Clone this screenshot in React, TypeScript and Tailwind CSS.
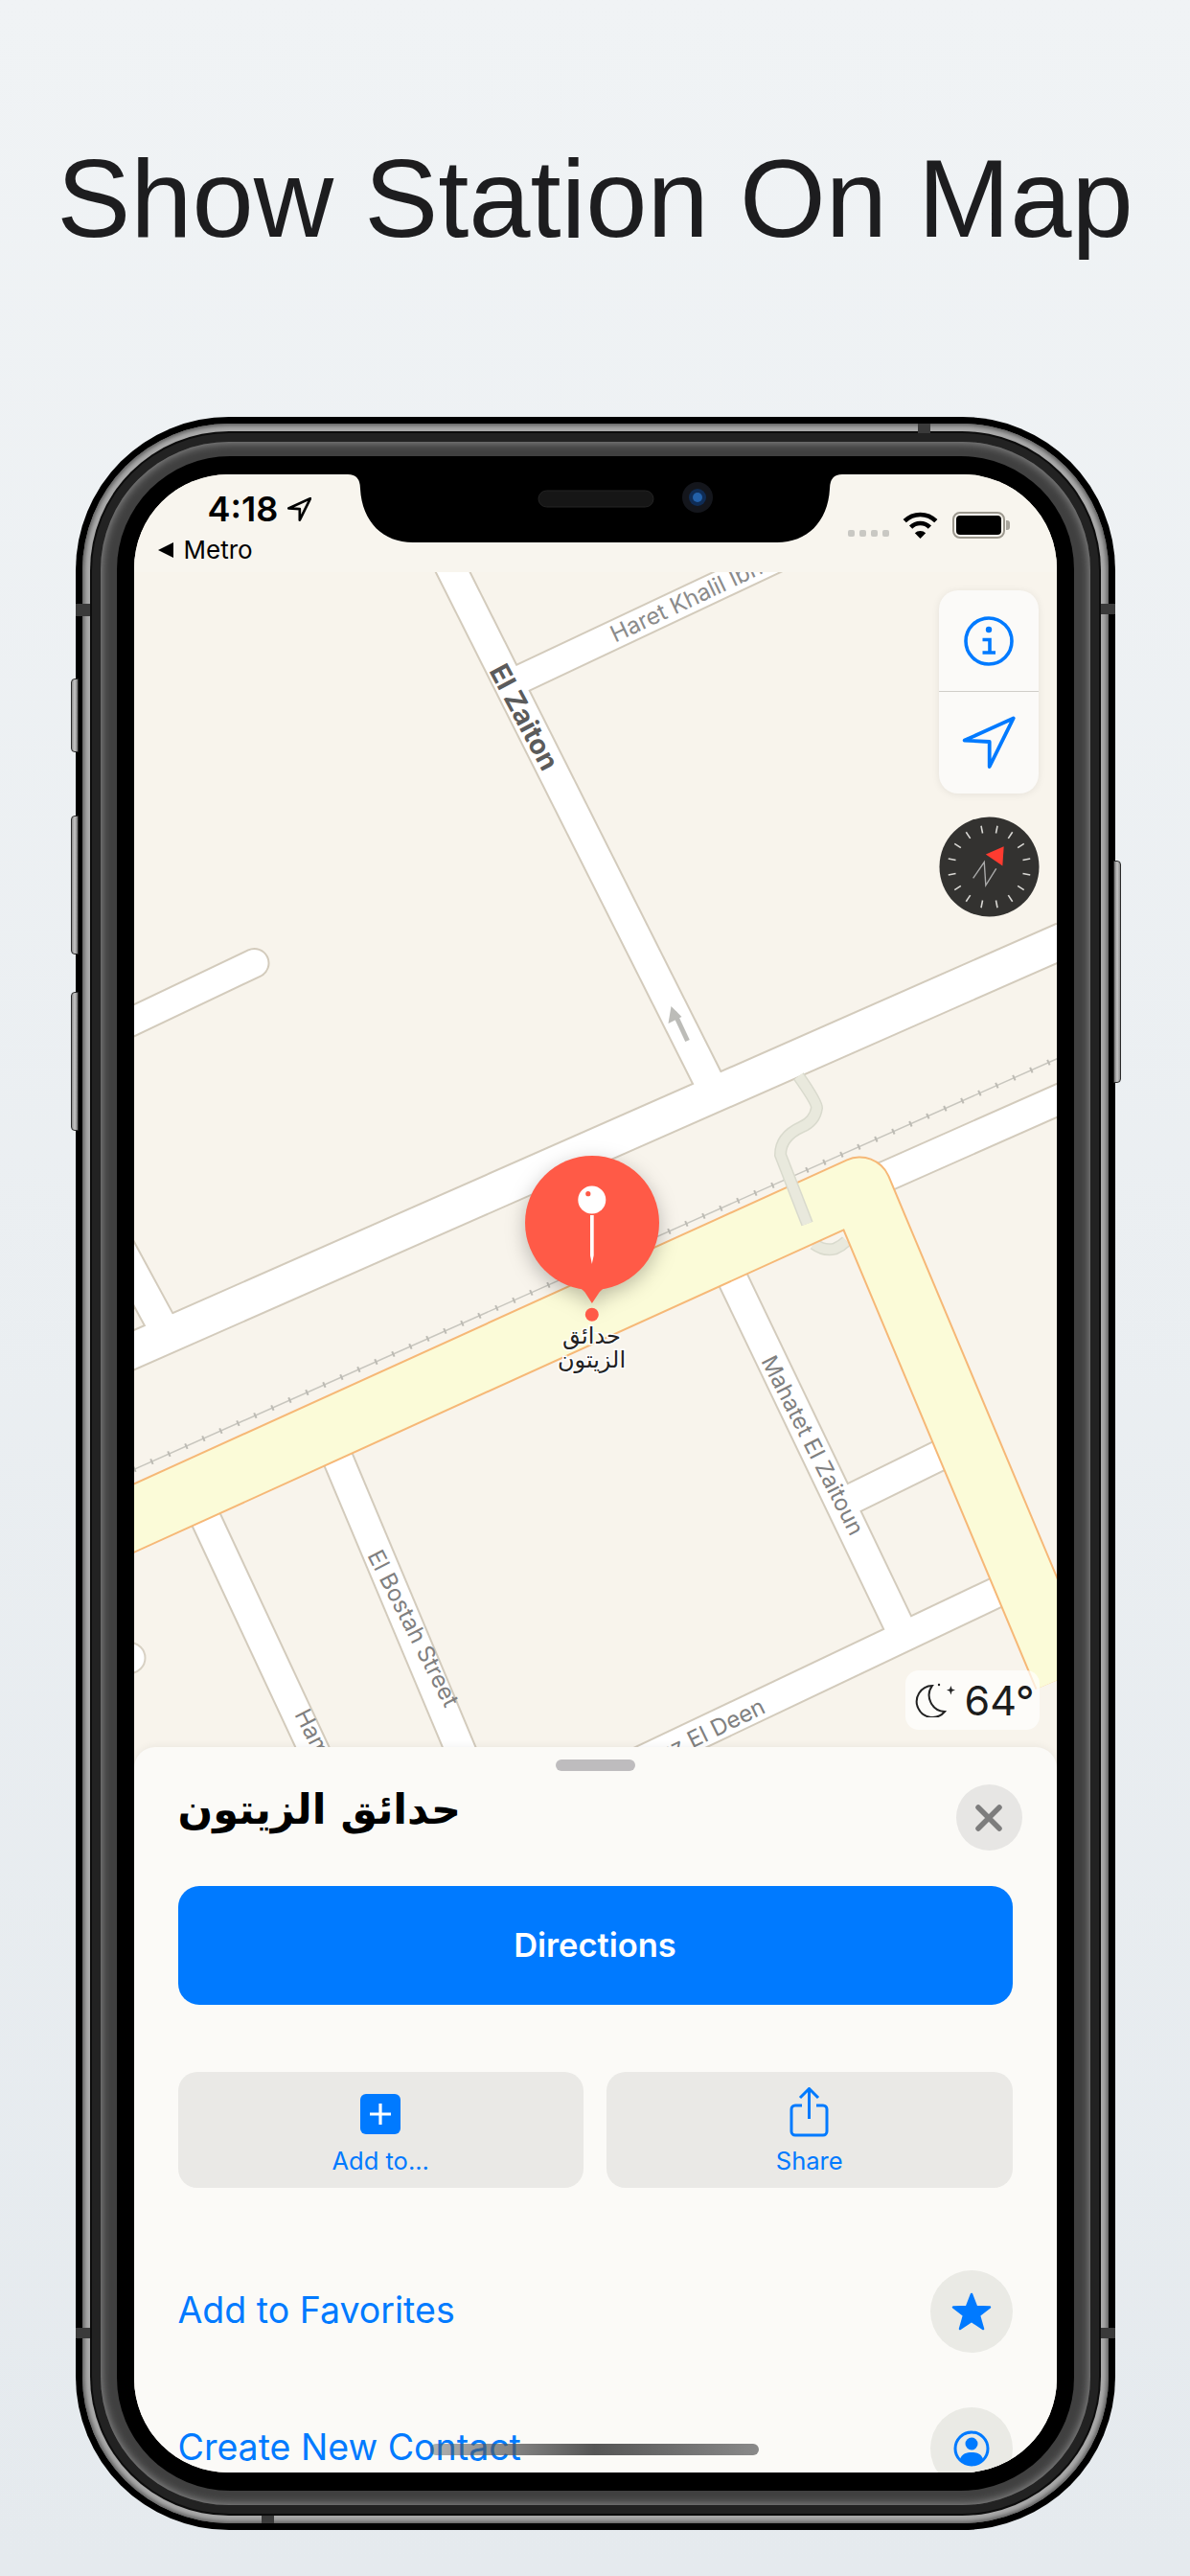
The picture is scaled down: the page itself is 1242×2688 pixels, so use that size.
const ui = "font-['Inter','Liberation_Sans',sans-serif]";
const arabic = "font-['DejaVu_Sans',sans-serif]";

type Road = { d: string; w: number; cap?: "round" | "butt" };

// page coordinates, the map svg viewBox starts at the screen corner
const roads: Road[] = [
  { d: "M100 1426 L1110 981", w: 36 },
  { d: "M441 535 L747 1144", w: 30 },
  { d: "M531 714 L900 540", w: 28 },
  { d: "M120 1074 L265 1005", w: 28, cap: "round" },
  { d: "M110 1275 L175 1395", w: 30 },
  { d: "M880 1247 L1110 1145", w: 30 },
  { d: "M345 1505 L490 1850", w: 30 },
  { d: "M205 1565 L338 1850", w: 30 },
  { d: "M750 1305 L949 1720", w: 30 },
  { d: "M620 1861 L1060 1652", w: 30 },
  { d: "M880 1568 L1000 1509", w: 30 },
];

const yellow = "M100 1602 L897 1240 L1111 1750";
const labelClass = "font-['Inter','Liberation_Sans',sans-serif]";

function MapLayer() {
  return (
    <svg viewBox="140 597 962 1248" className="block h-full w-full">
      <rect x="140" y="597" width="962" height="1248" fill="#f8f4ec" />
      <circle cx="135" cy="1730" r="16" fill="#fff" stroke="#d8d1c4" strokeWidth="2" />
      <path d="M849 1298 Q860 1306 871 1303 Q878 1300 883 1295" fill="none" stroke="#d9dacd" strokeWidth="13" />
      <path d="M849 1298 Q860 1306 871 1303 Q878 1300 883 1295" fill="none" stroke="#e9e9dd" strokeWidth="10" />
      {roads.map((r) => (
        <path key={r.d + "c"} d={r.d} fill="none" stroke="#d3cbbc" strokeWidth={r.w + 4} strokeLinecap={r.cap ?? "butt"} />
      ))}
      {roads.map((r) => (
        <path key={r.d} d={r.d} fill="none" stroke="#ffffff" strokeWidth={r.w} strokeLinecap={r.cap ?? "butt"} />
      ))}
      <path d="M139 1533.5 L1103 1104.6" stroke="#c8c6be" strokeWidth="1.5" />
      <path d="M139 1533.5 L1103 1104.6" stroke="#bdbbb4" strokeWidth="6" strokeDasharray="2 17.7" />
      <path d={yellow} fill="none" stroke="#f6b877" strokeWidth="67" strokeLinejoin="round" />
      <path d={yellow} fill="none" stroke="#fbfbd8" strokeWidth="63" strokeLinejoin="round" />
      <path d="M833 1123 Q852 1150 852 1156 Q850 1170 836 1176 Q814 1186 814 1205 L842 1277" fill="none" stroke="#d9dacd" strokeWidth="13" />
      <path d="M833 1123 Q852 1150 852 1156 Q850 1170 836 1176 Q814 1186 814 1205 L842 1277" fill="none" stroke="#e9e9dd" strokeWidth="10" />
      <path d="M717 1086 L703 1056" stroke="#bcbcb8" strokeWidth="5" fill="none" />
      <path d="M700 1050 L697 1068 L711 1061 Z" fill="#bcbcb8" />

      <text x="547" y="748" textAnchor="middle" dominantBaseline="central" transform="rotate(62 547 748)" fontSize="28.5" fontWeight="700" fill="#5b5b5b" className={labelClass}>El Zaiton</text>
      <text x="638" y="663" dominantBaseline="central" transform="rotate(-25.2 638 663)" fontSize="24" fill="#8b8b8b" className={labelClass}>Haret Khalil Ibn</text>
      <text x="848" y="1508" textAnchor="middle" dominantBaseline="central" transform="rotate(63 848 1508)" fontSize="23.5" fill="#808080" className={labelClass}>Mahatet El Zaitoun</text>
      <text x="431" y="1699" textAnchor="middle" dominantBaseline="central" transform="rotate(63 431 1699)" fontSize="24" fill="#808080" className={labelClass}>El Bostah Street</text>
      <text x="314" y="1785" dominantBaseline="central" transform="rotate(63 314 1785)" fontSize="24" fill="#808080" className={labelClass}>Hamdy</text>
      <text x="796" y="1779" textAnchor="end" dominantBaseline="central" transform="rotate(-26 796 1779)" fontSize="24" fill="#808080" className={labelClass}>Ezz El Deen</text>

      <g className="drop-shadow-[0_6px_10px_rgba(0,0,0,0.25)]">
        <circle cx="617.5" cy="1276" r="70" fill="#ff5a47" />
        <path d="M590 1336 Q608 1344 611 1350 L617.4 1360 L624 1350 Q627 1344 645 1336 Z" fill="#ff5a47" />
      </g>
      <circle cx="617.3" cy="1252" r="14.5" fill="#fff" />
      <circle cx="613.3" cy="1245.7" r="2.6" fill="#ff5a47" />
      <path d="M615.5 1268 H619.2 V1310 L617.3 1319 L615.5 1310 Z" fill="#fff" />
      <circle cx="617.3" cy="1371.7" r="7" fill="#ff5a47" />
      <g className={arabic} fontSize="24" textAnchor="middle" fill="#222" stroke="#fff" strokeWidth="3" paintOrder="stroke" direction="rtl">
        <text x="617" y="1402">حدائق</text>
        <text x="617" y="1427">الزيتون</text>
      </g>
    </svg>
  );
}

function Compass() {
  const ticks = Array.from({ length: 16 }, (_, i) => ((i * 22.5 + 11.25) * Math.PI) / 180);
  return (
    <svg viewBox="-53 -53 106 106" className="h-[105px] w-[105px]">
      <circle r="52.5" fill="#333230" />
      {ticks.map((a) => (
        <line key={a} x1={Math.sin(a) * 36} y1={-Math.cos(a) * 36} x2={Math.sin(a) * 44} y2={-Math.cos(a) * 44} stroke="#d9d8d4" strokeWidth="1.6" />
      ))}
      <path d="M-3.7 -13 L15.3 -21.5 L14 -1 Z" fill="#ff3b30" />
      <path d="M-17 12 L-5.3 -5 L-3.7 19.5 L7.3 2" fill="none" stroke="#aaa" strokeWidth="1.4" />
    </svg>
  );
}

function MapControls() {
  return (
    <div className="absolute right-[18px] top-[19px] flex flex-col items-center gap-[24px]">
      <div className="w-[104px] overflow-hidden rounded-[20px] bg-[#fbfaf8] shadow-[0_1px_8px_rgba(0,0,0,0.08)]">
        <div className="flex h-[106px] items-center justify-center border-b border-[#d0cec9]">
          <svg viewBox="0 0 54 54" className="h-[54px] w-[54px]" fill="none" stroke="#007aff">
            <circle cx="27" cy="27" r="24" strokeWidth="3.6" />
            <circle cx="27" cy="15" r="3.2" fill="#007aff" stroke="none" />
            <path d="M20.5 25.5 H28 V39 M20.5 39 H34" strokeWidth="3.6" />
          </svg>
        </div>
        <div className="flex h-[106px] items-center justify-center">
          <svg viewBox="0 0 56 56" className="h-[56px] w-[56px]" fill="none" stroke="#007aff" strokeWidth="3.8" strokeLinejoin="round">
            <path d="M53.7 2.5 L2.7 25.6 L28.7 27 L28.7 53 Z" />
          </svg>
        </div>
      </div>
      <Compass />
    </div>
  );
}

function Weather() {
  return (
    <div className="absolute left-[805px] top-[1146px] flex h-[62px] w-[140px] items-center gap-[8px] rounded-[14px] bg-white/70 pl-[8px]">
      <svg viewBox="0 0 46 36" className="h-[36px] w-[46px]" fill="none" stroke="#222" strokeWidth="2">
        <path d="M20 3 A16.5 16.5 0 1 0 33 30 A17 17 0 0 1 20 3 Z" />
        <path d="M39.4 3 L40.6 6.5 L44 7.6 L40.6 8.8 L39.4 12.5 L38.2 8.8 L35 7.6 L38.2 6.5 Z" fill="#222" stroke="none" />
        <circle cx="27" cy="2" r="1.2" fill="#222" stroke="none" />
      </svg>
      <span className={`${ui} text-[43px] leading-none text-[#1c1c1c]`}>64°</span>
    </div>
  );
}

function StatusBar() {
  return (
    <div className="relative flex h-[102px] shrink-0 justify-between bg-[#f8f5ee]">
      <div className={`${ui} pl-[25px] pt-[18px] text-black`}>
        <div className="flex items-center gap-[10px] pl-[52px]">
          <span className="text-[36px] font-semibold leading-[36px]">4:18</span>
          <svg viewBox="0 0 56 56" className="h-[25px] w-[25px]" fill="none" stroke="#000" strokeWidth="6" strokeLinejoin="round">
            <path d="M53.7 2.5 L2.7 25.6 L28.7 27 L28.7 53 Z" />
          </svg>
        </div>
        <div className="mt-[13px] flex items-center gap-[11px]">
          <div className="h-0 w-0 border-y-[8px] border-r-[16px] border-y-transparent border-r-black" />
          <span className="text-[26px] font-normal leading-[24px]">Metro</span>
        </div>
      </div>
      <div className="flex items-start pr-[49px] pt-[39px]">
        <div className="mt-[19px] flex gap-[5px]">
          <div className="h-[7px] w-[7px] rounded-[2px] bg-[#c9c8c3]" />
          <div className="h-[7px] w-[7px] rounded-[2px] bg-[#c9c8c3]" />
          <div className="h-[7px] w-[7px] rounded-[2px] bg-[#c9c8c3]" />
          <div className="h-[7px] w-[7px] rounded-[2px] bg-[#c9c8c3]" />
        </div>
        <svg viewBox="0 0 37 28" className="ml-[14px] h-[28px] w-[37px]" fill="none" stroke="#000" strokeWidth="4.6">
          <path d="M2.2 9.7 A23 23 0 0 1 34.8 9.7" />
          <path d="M8.6 16.1 A14 14 0 0 1 28.4 16.1" />
          <path d="M18.5 28 L12.8 22.3 A8 8 0 0 1 24.2 22.3 Z" fill="#000" stroke="none" />
        </svg>
        <div className="ml-[15px] flex items-center">
          <div className="h-[28px] w-[55px] rounded-[8px] border-2 border-[#9c988e] p-[2px]">
            <div className="h-full w-full rounded-[4px] bg-black" />
          </div>
          <div className="ml-[1px] h-[10px] w-[4px] rounded-r-[3px] bg-[#a8a59c]" />
        </div>
      </div>
    </div>
  );
}

function Notch() {
  return (
    <svg viewBox="360 495 522 71" className="absolute left-[220px] top-0 h-[71px] w-[522px]">
      <path d="M360 495 L363 495 Q376 495 376 510 C378 545 400 566 431 566 L811 566 C842 566 864 545 866 510 Q866 495 879 495 L882 495 Z" fill="#000" />
      <rect x="562" y="512" width="120" height="17" rx="8.5" fill="#161616" stroke="#242424" />
      <circle cx="728" cy="519" r="16" fill="#14161c" />
      <circle cx="728" cy="519" r="9" fill="#0f2c55" />
      <circle cx="728" cy="519" r="5" fill="#2360a8" />
    </svg>
  );
}

function Sheet() {
  return (
    <div className="relative -mt-[22px] flex-1 rounded-t-[22px] bg-[#fbfaf7] pt-[13px] shadow-[0_-1px_8px_rgba(0,0,0,0.06)]">
      <div className="mx-auto h-[12px] w-[83px] rounded-full bg-[#bebcbe]" />
      <div className="flex items-center justify-between pl-[46px] pr-[36px] pt-[14px]">
        <h2 dir="rtl" className={`${arabic} -translate-y-[9px] text-[43px] font-bold leading-[50px] text-black`}>حدائق الزيتون</h2>
        <button className="flex h-[69px] w-[69px] items-center justify-center rounded-full bg-[#e7e6e4]">
          <svg viewBox="0 0 28 28" className="h-[28px] w-[28px]" stroke="#7d7d7d" strokeWidth="5.5" strokeLinecap="round">
            <path d="M3 3 L25 25 M25 3 L3 25" />
          </svg>
        </button>
      </div>
      <div className="px-[46px]">
        <button className={`${ui} mt-[37px] h-[124px] w-full rounded-[22px] bg-[#007aff] text-[34.5px] font-semibold text-white`}>Directions</button>
        <div className={`${ui} mt-[70px] grid grid-cols-2 gap-[24px] text-[25.5px] text-[#007aff]`}>
          <button className="flex h-[121px] flex-col items-center rounded-[20px] bg-[#eae9e6] pt-[23px]">
            <span className="flex h-[42px] w-[42px] items-center justify-center rounded-[6px] bg-[#007aff]">
              <svg viewBox="0 0 24 24" className="h-[24px] w-[24px]" stroke="#fff" strokeWidth="3.2"><path d="M12 1 V23 M1 12 H23" /></svg>
            </span>
            <span className="mt-[12px] leading-[32px]">Add to...</span>
          </button>
          <button className="flex h-[121px] flex-col items-center rounded-[20px] bg-[#eae9e6] pt-[16px]">
            <svg viewBox="0 0 41 52" className="h-[52px] w-[41px]" fill="none" stroke="#007aff" strokeWidth="3">
              <path d="M13 19 H6 a4 4 0 0 0 -4 4 v23 a4 4 0 0 0 4 4 h29 a4 4 0 0 0 4 -4 V23 a4 4 0 0 0 -4 -4 h-7" />
              <path d="M20.5 33 V2 M11 11 L20.5 1.5 L30 11" />
            </svg>
            <span className="mt-[9px] leading-[32px]">Share</span>
          </button>
        </div>
        <div className={`${ui} mt-[85px] flex h-[87px] items-center justify-between text-[37.5px] text-[#007aff]`}>
          <span>Add to Favorites</span>
          <span className="flex h-[86px] w-[86px] items-center justify-center rounded-full bg-[#eaeae5]">
            <svg viewBox="0 0 42 40" className="h-[40px] w-[42px]" fill="#007aff" stroke="#007aff" strokeWidth="2.5" strokeLinejoin="round">
              <path d="M21 2 L26 15 L40 15.5 L29 24 L33 38 L21 30 L9 38 L13 24 L2 15.5 L16 15 Z" />
            </svg>
          </span>
        </div>
        <div className={`${ui} mt-[56px] flex h-[87px] items-center justify-between text-[37.5px] text-[#007aff]`}>
          <span>Create New Contact</span>
          <span className="flex h-[86px] w-[86px] items-center justify-center rounded-full bg-[#eaeae5]">
            <svg viewBox="0 0 38 38" className="h-[38px] w-[38px]" fill="#007aff">
              <circle cx="19" cy="19" r="17" fill="none" stroke="#007aff" strokeWidth="3" />
              <circle cx="19" cy="14" r="6.5" />
              <path d="M7 30 C9 24 14 23 19 23 C24 23 29 24 31 30 C28 34 24 36 19 36 C14 36 10 34 7 30 Z" />
            </svg>
          </span>
        </div>
      </div>
    </div>
  );
}

function SideButton({ className }: { className: string }) {
  return <div className={`absolute w-[8px] border border-[#2a2a2a] bg-gradient-to-r from-[#8c8c8c] via-[#c8c8c8] to-[#777] ${className}`} />;
}

export default function App() {
  return (
    <div className="flex h-[2688px] w-[1242px] flex-col items-center overflow-hidden bg-gradient-to-b from-[#f0f3f5] to-[#e5eaee]">
      <h1 className="flex h-[414px] items-center whitespace-nowrap font-['Liberation_Sans',sans-serif] text-[115.5px] font-normal text-[#1d1d1f]">
        Show Station On Map
      </h1>

      {/* phone */}
      <div className="relative mt-[21px] h-[2205px] w-[1085px] shrink-0">
        <SideButton className="left-[-5px] top-[273px] h-[77px] rounded-l-[4px]" />
        <SideButton className="left-[-5px] top-[416px] h-[145px] rounded-l-[4px]" />
        <SideButton className="left-[-5px] top-[600px] h-[145px] rounded-l-[4px]" />
        <SideButton className="right-[-6px] top-[463px] h-[232px] rotate-180 rounded-l-[4px]" />

        <div className="h-full rounded-[160px] bg-black p-[7px]">
          <div className="h-full rounded-[153px] bg-[#a9a9a9] p-[8px] shadow-[inset_0_0_4px_2px_#5a5a5a]">
            <div className="h-full rounded-[145px] bg-[#0c0c0c] p-[2px]">
              <div className="h-full rounded-[143px] bg-[#222] p-[9px]">
                <div className="h-full rounded-[134px] bg-[#404040] px-[17px] py-[15px] shadow-[inset_0_0_10px_1px_#8e8e8e]">
                  <div className="h-full rounded-[118px] bg-black px-[18px] py-[19px]">
                    <div className="relative flex h-full flex-col overflow-hidden rounded-[98px] bg-[#f8f4ec]">
                      <StatusBar />
                      <div className="relative h-[1248px] shrink-0">
                        <MapLayer />
                        <MapControls />
                        <Weather />
                      </div>
                      <Sheet />
                      <Notch />
                      <div className="absolute left-[309px] top-[2055px] h-[12px] w-[343px] rounded-full bg-gradient-to-r from-[#55555570] via-[#555] to-[#8a8a8a]" />
                    </div>
                  </div>
                </div>
              </div>
            </div>
          </div>
        </div>

        {/* antenna bands */}
        <div className="absolute left-0 top-[195px] h-[13px] w-[15px] bg-[#3a3a3a]" />
        <div className="absolute right-0 top-[195px] h-[11px] w-[15px] bg-[#3a3a3a]" />
        <div className="absolute left-0 top-[1994px] h-[11px] w-[15px] bg-[#3a3a3a]" />
        <div className="absolute right-0 top-[1994px] h-[11px] w-[15px] bg-[#3a3a3a]" />
        <div className="absolute left-[879px] top-[7px] h-[10px] w-[13px] bg-[#3a3a3a]" />
        <div className="absolute left-[194px] bottom-[7px] h-[8px] w-[13px] bg-[#3a3a3a]" />
      </div>
    </div>
  );
}
